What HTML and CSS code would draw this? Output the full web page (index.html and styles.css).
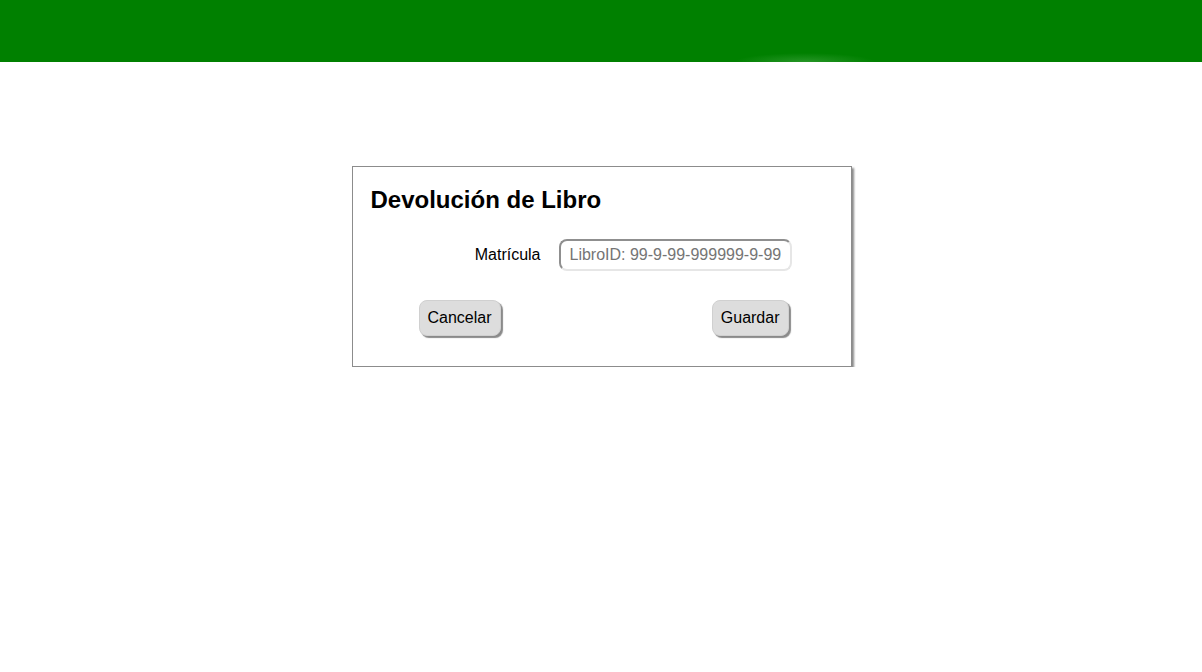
FILE: index.html
```html
<!DOCTYPE html>
<html lang="es">
<head>
<meta charset="utf-8">
<title>Devolución de Libro</title>
<link rel="stylesheet" href="styles.css">
</head>
<body>
<header class="topbar"></header>
<main class="page">
  <section class="card">
    <h2 class="card-title">Devolución de Libro</h2>
    <form class="form">
      <div class="field-row">
        <label class="field-label" for="matricula">Matrícula</label>
        <input class="field-input" id="matricula" type="text" placeholder="LibroID: 99-9-99-999999-9-99">
      </div>
      <div class="button-row">
        <button type="button" class="btn">Cancelar</button>
        <button type="button" class="btn">Guardar</button>
      </div>
    </form>
  </section>
</main>
</body>
</html>
```
FILE: styles.css
```css
html, body {
  margin: 0;
  padding: 0;
  background: #ffffff;
  font-family: "Liberation Sans", Arial, sans-serif;
  color: #000;
}

.topbar {
  height: 62px;
  background:
    radial-gradient(ellipse 70px 9px at 805px 62px, rgba(110, 190, 110, 0.35), rgba(0, 128, 0, 0) 100%),
    #008000;
}

.page {
  display: flex;
  justify-content: center;
  padding-top: 104px;
  padding-left: 1px;
}

.card {
  box-sizing: border-box;
  width: 500px;
  border: 1px solid #8c8c8c;
  box-shadow: 2px 2px 2px #8a8a8a;
  padding: 18px 18px 30px 18px;
  background: #fff;
}

.card-title {
  margin: 1px 0 0 0;
  font-size: 24px;
  font-weight: bold;
  line-height: 28px;
}

.form {
  margin: 25px 0 0 48px;
  width: 373px;
}

.field-row {
  display: flex;
  justify-content: flex-end;
  align-items: center;
  gap: 18px;
}

.field-label {
  font-size: 16px;
}

.field-input {
  box-sizing: border-box;
  width: 233px;
  height: 32px;
  border: 2px solid;
  border-color: #8f8f8f #e6e6e6 #e6e6e6 #8f8f8f;
  border-radius: 8px;
  padding: 0 9px;
  font-family: "Liberation Sans", Arial, sans-serif;
  font-size: 16px;
  background: #fff;
  outline: none;
}

.field-input::placeholder {
  color: #757575;
}

.button-row {
  display: flex;
  justify-content: space-between;
  margin-top: 29px;
  padding-right: 3px;
}

.btn {
  box-sizing: border-box;
  height: 36px;
  padding: 0 8px;
  border: 1px solid #d0d0d0;
  border-radius: 8px;
  background: #dddddd;
  box-shadow: 2px 2px 1px #8a8a8a;
  font-family: "Liberation Sans", Arial, sans-serif;
  font-size: 16px;
  color: #000;
  cursor: pointer;
}
```
